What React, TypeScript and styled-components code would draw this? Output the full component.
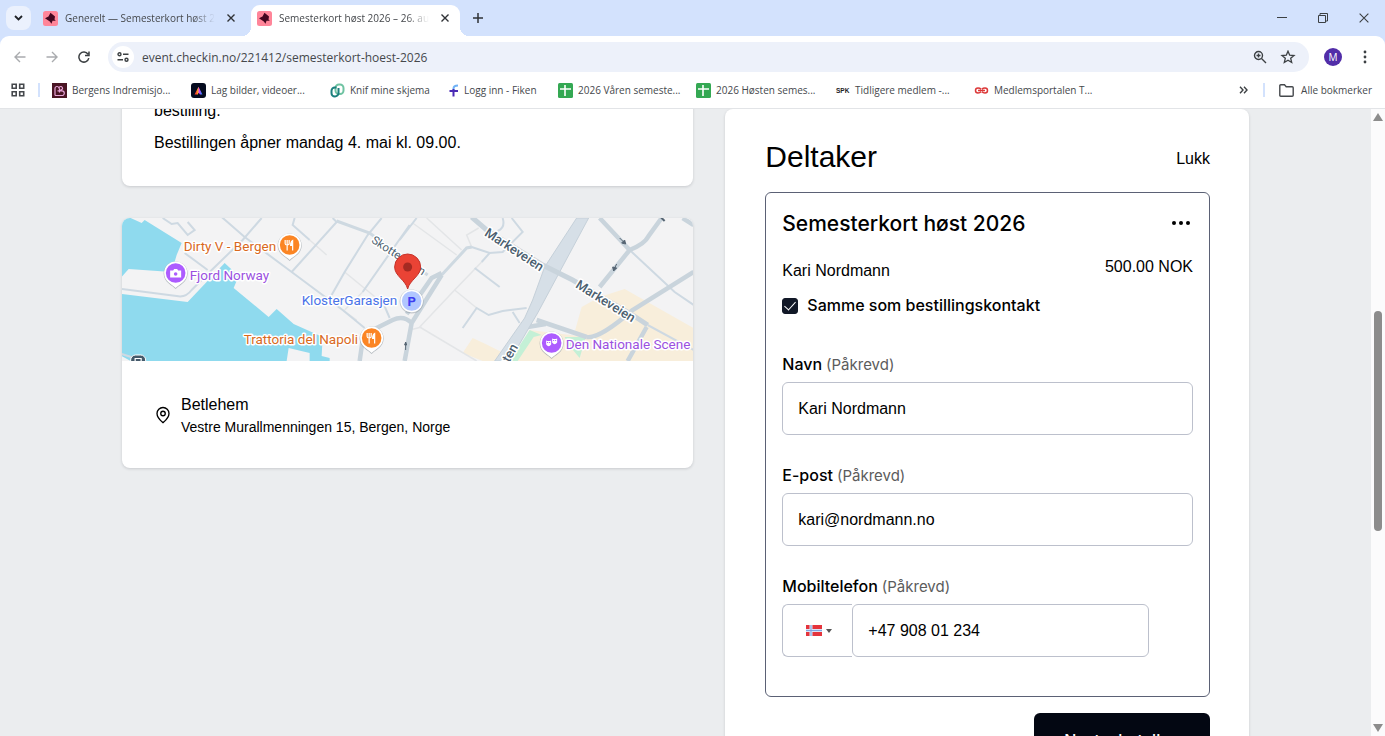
import React, { useState } from "react";
import styled, { createGlobalStyle } from "styled-components";
import { MapPin } from "lucide-react";

const GlobalStyle = createGlobalStyle`
  *, *::before, *::after { box-sizing: border-box; }
  body { margin: 0; font-family: "Liberation Sans", Arial, sans-serif; color: #000; }
  button, input, select { font: inherit; color: inherit; }
  button { border: 0; background: none; padding: 0; cursor: pointer; }
  a { color: inherit; text-decoration: none; }
  h1, h2, p { margin: 0; }
  svg { display: block; flex: none; }
`;

const mediumFont = `Inter, "Liberation Sans", sans-serif`;

const Window = styled.div`
  height: 100vh;
  display: flex;
  flex-direction: column;
  overflow: hidden;
  background: #d3e2fd;
`;

/* ---------- browser chrome ---------- */

const Chrome = styled.header`
  flex: none;
  font-family: "Open Sans", "Noto Sans", sans-serif;
  color: #45484c;
`;

const TabStrip = styled.div`
  height: 36px;
  display: flex;
  align-items: flex-end;
  padding-left: 6px;
`;

const TabSearch = styled.button`
  width: 25px;
  height: 24px;
  margin: 0 4px 6px 0;
  border-radius: 8px;
  background: #ebf1fd;
  display: grid;
  place-items: center;
`;

const Tab = styled.div<{ $active?: boolean }>`
  position: relative;
  width: ${(p) => (p.$active ? 209 : 216)}px;
  height: 31px;
  display: flex;
  align-items: center;
  gap: 7px;
  padding: 0 ${(p) => (p.$active ? 6 : 11)}px 5px ${(p) => (p.$active ? 6 : 8)}px;
  border-radius: 9px 9px 0 0;
  background: ${(p) => (p.$active ? "#fff" : "transparent")};
  font-size: 10px;

  &::before, &::after {
    content: "";
    display: ${(p) => (p.$active ? "block" : "none")};
    position: absolute;
    bottom: 0;
    width: 9px;
    height: 9px;
  }
  &::before { left: -9px; background: radial-gradient(circle at 0 0, transparent 9px, #fff 9px); }
  &::after { right: -9px; background: radial-gradient(circle at 100% 0, transparent 9px, #fff 9px); }
`;

const TabTitle = styled.span`
  flex: 1;
  min-width: 0;
  overflow: hidden;
  white-space: nowrap;
  mask-image: linear-gradient(90deg, #000 85%, transparent);
`;

const TabButton = styled.button`
  width: 18px;
  height: 18px;
  display: grid;
  place-items: center;
`;

const NewTab = styled(TabButton)`
  margin: 0 0 9px 9px;
`;

const WindowControls = styled.div`
  margin: 0 12px 9px auto;
  display: flex;
  gap: 23px;
`;

const Toolbar = styled.div`
  height: 42px;
  display: flex;
  align-items: center;
  padding: 0 11px;
  background: #fff;
  border-radius: 9px 9px 0 0;
`;

const ToolButton = styled.button`
  width: 18px;
  height: 18px;
  margin-right: 14px;
  display: grid;
  place-items: center;
`;

const AddressBar = styled.div`
  flex: 1;
  height: 30px;
  display: flex;
  align-items: center;
  padding: 0 12px 0 4px;
  margin-left: 1px;
  border-radius: 15px;
  background: #edf1fa;
`;

const SiteButton = styled.button`
  width: 22px;
  height: 22px;
  border-radius: 50%;
  background: #fff;
  display: grid;
  place-items: center;
`;

const Address = styled.input`
  flex: 1;
  min-width: 0;
  padding: 0 8px;
  border: 0;
  outline: 0;
  background: none;
  font-size: 12px;
  color: #45484c;
`;

const AddressAction = styled.button`
  margin-left: 12px;
`;

const Avatar = styled.button`
  width: 18px;
  height: 18px;
  margin: 0 20px 0 15px;
  border-radius: 50%;
  background: #512da8;
  color: #fff;
  font-size: 10px;
  line-height: 18px;
`;

const Bookmarks = styled.nav`
  height: 31px;
  display: flex;
  align-items: center;
  padding: 0 13px 6px 11px;
  background: #fff;
  border-bottom: 1px solid #e2e4e7;
  font-size: 10px;
`;

const Divider = styled.span`
  width: 2px;
  height: 14px;
  background: #d3e2fd;
`;

const AppsButton = styled.button`
  margin-right: 13px;
`;

const Bookmark = styled.a<{ $width: number }>`
  flex: 0 0 ${(p) => p.$width}px;
  display: flex;
  align-items: center;
  gap: 5px;
  white-space: nowrap;
`;

const BookmarkList = styled.div`
  flex: 1;
  display: flex;
  padding-left: 12px;
`;

const AllBookmarks = styled.a`
  display: flex;
  align-items: center;
  gap: 7px;
  margin-left: 14px;
`;

const MoreButton = styled.button`
  margin-right: 15px;
`;

/* ---------- page ---------- */

const Viewport = styled.div`
  flex: 1;
  min-height: 0;
  display: flex;
  background: #ebedef;
`;

const Page = styled.main`
  flex: 1;
  overflow: hidden;
`;

const Columns = styled.div`
  display: grid;
  grid-template-columns: 12fr 11fr;
  align-items: start;
  gap: 32px;
  max-width: 1127px;
  margin: 0 auto;
`;

const InfoColumn = styled.div`
  display: grid;
  gap: 32px;
  margin-top: -43px;
`;

const Card = styled.section`
  overflow: hidden;
  background: #fff;
  border-radius: 8px;
  box-shadow: 0 1px 3px rgba(16, 24, 40, 0.16);
`;

const Description = styled(Card)`
  display: grid;
  gap: 8px;
  padding: 33px 32px 31px;
  font-size: 16px;
  line-height: 24px;
`;

const MapDrawing = styled.svg`
  width: 100%;
  height: 143px;
  font-family: Roboto, sans-serif;
`;

const Venue = styled.div`
  display: flex;
  align-items: center;
  gap: 9px;
  padding: 32px 32px 31px;
`;

const VenueName = styled.p`
  font-size: 16px;
  line-height: 24px;
`;

const VenueAddress = styled.p`
  font-size: 14px;
  line-height: 20px;
`;

const OrderCard = styled(Card)`
  padding: 28px 39px 40px 40px;
`;

const OrderHead = styled.div`
  display: flex;
  align-items: center;
  justify-content: space-between;
  height: 40px;
  margin-bottom: 15px;
`;

const Heading = styled.h1`
  font-size: 30px;
  line-height: 40px;
  font-weight: 400;
`;

const TextButton = styled.button`
  padding-top: 4px;
  font-size: 16px;
  line-height: 24px;
`;

const Ticket = styled.div`
  padding: 16px 16px 39px;
  border: 1px solid #5b6175;
  border-radius: 6px;
`;

const TicketRow = styled.div`
  display: flex;
  align-items: flex-start;
  justify-content: space-between;
`;

const TicketTitle = styled.h2`
  font-family: ${mediumFont};
  font-size: 21px;
  line-height: 29px;
  font-weight: 500;
`;

const MenuButton = styled.button`
  height: 28px;
  margin-right: 3px;
`;

const Holder = styled.p`
  padding-top: 19px;
  font-size: 16px;
  line-height: 28px;
`;

const Price = styled(Holder)`
  line-height: 20px;
`;

const CheckLabel = styled.label`
  display: flex;
  align-items: center;
  gap: 9px;
  margin: 8px 0 35px;
  font-family: ${mediumFont};
  font-size: 16px;
  line-height: 24px;
  font-weight: 500;
`;

const Checkbox = styled.input`
  appearance: none;
  width: 16px;
  height: 16px;
  margin: 2px 0 0;
  border: 1px solid #111827;
  border-radius: 3px;
  display: grid;
  place-items: center;

  &:checked { background: #111827; }
  &:checked::before {
    content: "";
    width: 6px;
    height: 11px;
    margin-bottom: 3px;
    border: solid #fff;
    border-width: 0 1px 1px 0;
    transform: rotate(42deg);
  }
`;

const Field = styled.div`
  display: grid;
  gap: 6px;
  & + & { margin-top: 28px; }
`;

const FieldLabel = styled.label`
  display: flex;
  align-items: baseline;
  gap: 4px;
  height: 24px;
  font-family: ${mediumFont};
  font-size: 16px;
  line-height: 24px;
  font-weight: 500;
`;

const Required = styled.span`
  font-size: 15px;
  font-weight: 400;
  color: #5c5c5c;
`;

const TextInput = styled.input`
  width: 100%;
  min-width: 0;
  height: 53px;
  padding: 0 15px;
  border: 1px solid #bcc0cc;
  border-radius: 6px;
  outline: 0;
  background: #fff;
  font-size: 16px;
`;

const PhoneRow = styled.div`
  display: flex;
  margin-right: 44px;
`;

const CountryBox = styled.div`
  flex: 0 0 70px;
  display: flex;
  align-items: center;
  gap: 4px;
  padding-left: 23px;
  border: 1px solid #bcc0cc;
  border-right: 0;
  border-radius: 6px 0 0 6px;
  position: relative;
`;

const CountrySelect = styled.select`
  position: absolute;
  inset: 0;
  width: 100%;
  opacity: 0;
`;

const Submit = styled.button`
  display: block;
  width: 176px;
  height: 54px;
  margin: 16px 0 0 auto;
  border-radius: 6px;
  background: #030712;
  color: #fff;
  font-family: ${mediumFont};
  font-size: 16px;
  font-weight: 500;
`;

const Scrollbar = styled.div`
  flex: none;
  width: 14px;
  display: flex;
  flex-direction: column;
  align-items: center;
  justify-content: space-between;
  padding: 4px 0;
  background: #fbfbfc;
`;

const Track = styled.div`
  flex: 1;
  display: flex;
  flex-direction: column;
  width: 8px;
`;

const TrackSpace = styled.div<{ $grow: number }>`
  flex: ${(p) => p.$grow};
`;

const Thumb = styled.div`
  flex: 220;
  border-radius: 4px;
  background: #8c8c8c;
`;

/* ---------- icons ---------- */

const Cross = ({ size = 8, weight = 1.4, color = "#2f3236" }) => (
  <svg width={size} height={size} viewBox="0 0 8 8" stroke={color} strokeWidth={weight}>
    <path d="M.5.5l7 7M7.5.5l-7 7" />
  </svg>
);

const CheckinIcon = () => (
  <svg width="15" height="15" viewBox="0 0 15 15">
    <rect width="15" height="15" rx="2.5" fill="#ff8599" />
    <path d="M7.500 1.800L12 5.500 11.500 8.500 12.800 9.800 9.500 9.800 8.500 12.800 6.800 10.400 2 7.300 5.500 5.500z" fill="#43061f" />
  </svg>
);

const Arrow = ({ flip = false }) => (
  <svg width="12" height="12" viewBox="0 0 12 12" fill="none" stroke="#a9abae" strokeWidth="1.4">
    <path d={flip ? "M.5 6h10.500M6 1l5 5-5 5" : "M11.500 6H1M6 1L1 6l5 5"} />
  </svg>
);

const bookmarkIcons: Record<string, React.ReactNode> = {
  bergen: (
    <svg width="15" height="15" viewBox="0 0 15 15">
      <rect width="15" height="15" fill="#4a1524" />
      <path d="M3 12.500V5.500a2 2 0 014 0c0-3 4-2.500 3.500.5L7.500 8M3 12.500h7a2.300 2.300 0 000-4.600H5.500M7.500 5.500v4" fill="none" stroke="#e8a5d8" strokeWidth="1.2" />
    </svg>
  ),
  adobe: (
    <svg width="15" height="15" viewBox="0 0 15 15">
      <defs>
        <linearGradient id="rainbow">
          <stop offset="0.1" stopColor="#ff3d2e" />
          <stop offset="0.4" stopColor="#ffb020" />
          <stop offset="0.6" stopColor="#e03cff" />
          <stop offset="1" stopColor="#3a7bff" />
        </linearGradient>
      </defs>
      <rect width="15" height="15" rx="3" fill="#050b1f" />
      <path d="M4.500 11L7.500 5 10.500 11H9.300L7.500 8.200 6.400 11z" fill="url(#rainbow)" stroke="url(#rainbow)" strokeWidth="1.2" />
    </svg>
  ),
  knif: (
    <svg width="15" height="15" viewBox="0 0 15 15" fill="none" strokeWidth="2">
      <rect x="5.5" y="1.5" width="8" height="9.5" rx="3.5" stroke="#6fc3a2" />
      <path d="M6.500 4.500H4.800a3.300 3.300 0 00-3.300 3.300v2.400a3.300 3.300 0 003.300 3.300 3.500 3.500 0 003.700-3.300V5" stroke="#1b7f7d" />
    </svg>
  ),
  fiken: (
    <svg width="10" height="13" viewBox="0 0 10 13" fill="none" strokeWidth="2">
      <path d="M4.500 7V4.500Q4.500 1.500 9 1.500" stroke="#6fb1f5" />
      <path d="M.5 7H9M4.500 5v7.500" stroke="#4b2bb5" />
    </svg>
  ),
  sheet: (
    <svg width="15" height="15" viewBox="0 0 15 15">
      <rect width="15" height="15" rx="1.5" fill="#34a853" />
      <path d="M2 6h11M7 2v11" stroke="#fff" strokeWidth="1.6" />
    </svg>
  ),
  spk: (
    <svg width="15" height="15" viewBox="0 0 15 15">
      <text x="1" y="10" fontFamily="Liberation Sans, sans-serif" fontWeight="700" fontSize="6.5" fill="#222">SPK</text>
    </svg>
  ),
  chain: (
    <svg width="15" height="15" viewBox="0 0 15 15" fill="none" stroke="#dc3838" strokeWidth="1.5">
      <path d="M7 6.200Q6 5 4 5a2.500 2.500 0 000 5q2 0 3-1.200M8 6.200Q9 5 11 5a2.500 2.500 0 010 5q-2 0-3-1.200M4 7.500h7" />
    </svg>
  ),
};

const bookmarks = [
  { icon: "bergen", text: "Bergens Indremisjo...", width: 139 },
  { icon: "adobe", text: "Lag bilder, videoer...", width: 139 },
  { icon: "knif", text: "Knif mine skjema", width: 119 },
  { icon: "fiken", text: "Logg inn - Fiken", width: 109 },
  { icon: "sheet", text: "2026 Våren semeste...", width: 138 },
  { icon: "sheet", text: "2026 Høsten semes...", width: 139 },
  { icon: "spk", text: "Tidligere medlem -...", width: 139 },
  { icon: "chain", text: "Medlemsportalen T...", width: 139 },
];

/* ---------- map ---------- */

const minorRoads = [
  "M63 35L86 52",
  "M41 0L50 6 56 5 66 17 73 12 66 4",
  "M173 0L171 7 188 22",
  "M278 22L295 0",
  "M350 29L368 35 381 34 401 14 390 0",
  "M345 30L350 29M360 44L368 35",
  "M353 50L378 69",
  "M341 110L355 90 367 97 381 93 405 90M391 94L398 105",
  "M508 32L553 74 572 87",
  "M381 0Q384 10 376 13",
  "M526 107L572 132",
];

const lanes = [
  "M188 22L205 37",
  "M291 5L335 37M305 0L340 32",
  "M360 44L333 72 298 109 355 143",
  "M333 72L355 90",
  "M350 29L345 17 357 10",
  "M241 74L223 92M223 54L262 86",
  "M221 92L235 102M288 112L300 109",
];

const Badge = ({ x, y, color, children }: { x: number; y: number; color: string; children: React.ReactNode }) => (
  <g transform={`translate(${x} ${y})`}>
    <path d="M0 16C-3 12.500-12 9.500-12 .5a12 12 0 0124 0C12 9.500 3 12.500 0 16z" fill="#8b949c" opacity=".6" />
    <path d="M0 15C-3 11.500-11.500 9-11.500 0a11.500 11.500 0 0123 0C11.500 9 3 11.500 0 15z" fill="#fff" />
    <circle r="9.8" fill={color} />
    {children}
  </g>
);

const Fork = () => (
  <g stroke="#fff" fill="none" strokeWidth="1.2">
    <path d="M-4.500-5v3.500q0 1.500 2 1.500t2-1.500V-5M-2.500-5v10.500" />
    <path d="M3 5.500V-4.500q-2 1-2 5h2" fill="#fff" />
  </g>
);

const halo = { stroke: "#fff", strokeWidth: 3, paintOrder: "stroke", strokeLinejoin: "round" } as const;

const VenueMap = () => (
  <MapDrawing viewBox="0 0 572 143" preserveAspectRatio="xMidYMid slice" role="img" aria-label="Kart over Bergen">
    <rect width="572" height="143" fill="#f3f3f4" />
    <path d="M0 0H9L20 5 23 2 60 25 55 37 50 54 7 51 0 59z" fill="#8fdaee" />
    <path d="M0 76L66 84 103 45 117 58 112 70 147 99 155 91 172 106 201 119 200 138 208 140V143H188V135L167 130 165 143H9L0 138z" fill="#8fdaee" />
    <path d="M503 71L572 110V143H458L465 119 453 114 460 89 478 79z" fill="#f8eedb" />
    <path d="M351 120L366 127 380 134 378 143H361L341 135z" fill="#f8eedb" />
    <path d="M408 112L465 119 458 143H390z" fill="#f8eedb" />
    <path d="M408 112L420 117 412 119 396 143H388zM443 119L464 119 458 140 448 128z" fill="#c4f0d6" />
    <g fill="none" stroke="#e3e5e7" strokeWidth="1.5">
      {lanes.map((d) => <path key={d} d={d} />)}
    </g>
    <g fill="none" stroke="#ced9e2" strokeWidth="2">
      {minorRoads.map((d) => <path key={d} d={d} />)}
      <path d="M100-1L123 19 170 54 221 92 243 110" />
      <path d="M140 0L121 22 88 54 70 72Q64 80 55 78L0 71" />
      <path d="M170 54L215 4 211 0M260 0L246 17 223 54 210 77M288 7L241 74M262 86L268 100" />
      <path d="M0 136L16 141" />
    </g>
    <g fill="none" stroke="#ced9e1" strokeWidth="3">
      <path d="M215 3L248 15 275 35 306 57" />
      <path d="M320 57L345 30 350 29" />
    </g>
    <g fill="none" stroke="#c9d4dc" strokeWidth="4.5">
      <path d="M251 112L271 102Q282 97 290 105M283 143L290 105 320 57M285 96L310 60 320 55M238 143L241 122" />
      <path d="M465 119Q478 121 511 92L572 54M465 119L415 102M406 109L424 106M525 109L506 143M478 0L508 32 478 69M508 32Q523 26 527 18L540 0M561 0L572 7" />
    </g>
    <path d="M455 0H467L438 54 416 95 406 112 388 143H373L403 100 411 82 423 49z" fill="#d6dfe7" stroke="#c5d0d9" />
    <path d="M350-1L365 12 421 47 451 62 511 97 526 107" fill="none" stroke="#c9d4dc" strokeWidth="5" />
    <g stroke="#566573" fill="#566573" strokeWidth="1">
      <path d="M284 132V124M283 127l1-3 1 3zM495 46l-3 6M491 49l1 4 3-3zM498 20l5 5M500 25l4 1-1-4z" />
      <path d="M539-1l4 4" strokeWidth="2" />
    </g>

    <g fill="#4c5f70" fontWeight="500" {...halo}>
      <text transform="translate(249 24) rotate(33)" fontSize="11.5" fontWeight="400">Skottegaten</text>
      <text transform="translate(362 17) rotate(33)" fontSize="13">Markeveien</text>
      <text transform="translate(453 69) rotate(32)" fontSize="13">Markeveien</text>
      <text transform="translate(384 151) rotate(-60)" fontSize="13">eten</text>
    </g>
    <g fontSize="13.5" {...halo}>
      <text x="62" y="33" fill="#d9691d">Dirty V - Bergen</text>
      <text x="68" y="62" fill="#9b51e0">Fjord Norway</text>
      <text x="180" y="87" fill="#4a73e8">KlosterGarasjen</text>
      <text x="122" y="126" fill="#d9691d">Trattoria del Napoli</text>
      <text x="444" y="131" fill="#9b51e0">Den Nationale Scene</text>
    </g>

    <Badge x={168} y={27} color="#fb8524"><Fork /></Badge>
    <Badge x={250} y={120} color="#fb8524"><Fork /></Badge>
    <Badge x={54} y={55} color="#ad5cff">
      <path d="M-5.500-2.500h3l1-1.500h3l1 1.500h3v7h-11z" fill="#fff" />
      <circle cy="1" r="1.8" fill="#ad5cff" />
    </Badge>
    <Badge x={430} y={125} color="#ad5cff">
      <path d="M-5.500-2.500q2.500 1 5 0v4q-2.500 3.500-5 0zM.5-4.500q2.500 1 5 0v4q-2.500 3.500-5 0z" fill="#fff" />
      <path d="M-4.500-.5h1M-2.500-.5h1M1.500-2.500h1M3.500-2.500h1" stroke="#ad5cff" />
    </Badge>
    <circle cx="290" cy="83.5" r="12" fill="#8b949c" opacity=".45" />
    <circle cx="290" cy="83" r="11.3" fill="#fff" />
    <circle cx="290" cy="83" r="9.8" fill="#b1c6ff" />
    <text x="290" y="88" textAnchor="middle" fontSize="13" fontWeight="700" fill="#3d3df0">P</text>
    <path d="M286 71C284 62 273 58 273 49a13 13 0 0126 0C299 58 288 62 286 71z" fill="#ea4335" stroke="#c5332a" />
    <circle cx="286" cy="49" r="4.5" fill="#a52a22" />
    <rect x="9" y="137" width="15" height="14" rx="5" fill="#455a6b" stroke="#fff" />
    <path d="M13.500 143v-2.500h6v2.500" fill="none" stroke="#fff" strokeWidth="1.2" />
  </MapDrawing>
);

const NorwayFlag = () => (
  <svg width="16" height="11" viewBox="0 0 16 11">
    <rect width="16" height="11" fill="#e5343c" />
    <path d="M5 0v11M0 5.500h16" stroke="#d9e4f7" strokeWidth="3" />
    <path d="M5 0v11M0 5.500h16" stroke="#7fa3e0" strokeWidth="1" />
  </svg>
);

const TextField = ({ id, label, type, initial }: { id: string; label: string; type: string; initial: string }) => {
  const [value, setValue] = useState(initial);
  return (
    <Field>
      <FieldLabel htmlFor={id}>{label} <Required>(Påkrevd)</Required></FieldLabel>
      <TextInput id={id} type={type} value={value} onChange={(e) => setValue(e.target.value)} />
    </Field>
  );
};

const BrowserChrome = () => (
  <Chrome>
    <TabStrip>
      <TabSearch aria-label="Søk i faner">
        <svg width="9" height="6" viewBox="0 0 9 6" fill="none" stroke="#1f2226" strokeWidth="1.8"><path d="M1 1l3.500 3.500L8 1" /></svg>
      </TabSearch>
      <Tab>
        <CheckinIcon />
        <TabTitle>Generelt — Semesterkort høst 2026</TabTitle>
        <TabButton aria-label="Lukk fane"><Cross /></TabButton>
      </Tab>
      <Tab $active>
        <CheckinIcon />
        <TabTitle>Semesterkort høst 2026 – 26. august</TabTitle>
        <TabButton aria-label="Lukk fane"><Cross /></TabButton>
      </Tab>
      <NewTab aria-label="Ny fane">
        <svg width="10" height="10" viewBox="0 0 10 10" stroke="#2f3236" strokeWidth="1.5"><path d="M5 0v10M0 5h10" /></svg>
      </NewTab>
      <WindowControls>
        <TabButton aria-label="Minimer">
          <svg width="10" height="10" viewBox="0 0 10 10" stroke="#3c4043"><path d="M0 4.500h10" /></svg>
        </TabButton>
        <TabButton aria-label="Gjenopprett">
          <svg width="10" height="10" viewBox="0 0 10 10" fill="none" stroke="#3c4043"><path d="M2 2.500V.5h7.500v7.500h-2M.5 2.500h7v7h-7z" /></svg>
        </TabButton>
        <TabButton aria-label="Lukk vindu"><Cross size={10} weight={0.9} color="#3c4043" /></TabButton>
      </WindowControls>
    </TabStrip>
    <Toolbar>
      <ToolButton aria-label="Tilbake"><Arrow /></ToolButton>
      <ToolButton aria-label="Fremover"><Arrow flip /></ToolButton>
      <ToolButton aria-label="Last inn på nytt">
        <svg width="12" height="12" viewBox="0 0 12 12" fill="none" stroke="#3c4043" strokeWidth="1.5"><path d="M10.800 7.200A5 5 0 1110 3.200M11 .5v4H7" /></svg>
      </ToolButton>
      <AddressBar>
        <SiteButton aria-label="Nettstedsinformasjon">
          <svg width="12" height="10" viewBox="0 0 12 10" fill="none" stroke="#3c4043" strokeWidth="1.4">
            <circle cx="2.5" cy="2.2" r="1.5" /><circle cx="9.5" cy="7.8" r="1.5" /><path d="M6 2.200h5.500M.5 7.800H6" />
          </svg>
        </SiteButton>
        <Address aria-label="Adresse" defaultValue="event.checkin.no/221412/semesterkort-hoest-2026" />
        <AddressAction aria-label="Zoom">
          <svg width="14" height="14" viewBox="0 0 14 14" fill="none" stroke="#3c4043" strokeWidth="1.4"><circle cx="5.5" cy="5.5" r="4" /><path d="M8.500 8.500L13 13M5.500 3.500v4M3.500 5.500h4" /></svg>
        </AddressAction>
        <AddressAction aria-label="Bokmerk siden">
          <svg width="18" height="14" viewBox="0 0 18 14" fill="none" stroke="#3c4043" strokeWidth="1.3"><path d="M9 1.200l1.700 4 4.300.3-3.300 2.800 1 4.200L9 10.300l-3.700 2.200 1-4.200L3 5.500l4.300-.3z" /></svg>
        </AddressAction>
      </AddressBar>
      <Avatar aria-label="Profil">M</Avatar>
      <button aria-label="Meny">
        <svg width="12" height="14" viewBox="0 0 12 14" fill="#3c4043"><circle cx="3" cy="2" r="1.4" /><circle cx="3" cy="7" r="1.4" /><circle cx="3" cy="12" r="1.4" /></svg>
      </button>
    </Toolbar>
    <Bookmarks aria-label="Bokmerker">
      <AppsButton aria-label="Faneregrupper">
        <svg width="14" height="14" viewBox="0 0 14 14" fill="none" stroke="#45484c" strokeWidth="1.6">
          <path d="M1.200 1.200h4v4h-4zM8.700 1.200h4v4h-4zM1.200 8.700h4v4h-4zM8.700 8.700h4v4h-4z" />
        </svg>
      </AppsButton>
      <Divider />
      <BookmarkList>
        {bookmarks.map((b) => (
          <Bookmark key={b.text} href="#" $width={b.width}>{bookmarkIcons[b.icon]}{b.text}</Bookmark>
        ))}
      </BookmarkList>
      <MoreButton aria-label="Flere bokmerker">
        <svg width="9" height="8" viewBox="0 0 9 8" fill="none" stroke="#3c4043" strokeWidth="1.4"><path d="M1 .8L4 4 1 7.200M5 .8L8 4 5 7.200" /></svg>
      </MoreButton>
      <Divider />
      <AllBookmarks href="#">
        <svg width="15" height="13" viewBox="0 0 15 13" fill="none" stroke="#45484c" strokeWidth="1.4"><path d="M.8 11.200V1.800q0-1 1-1h3.700L7.200 2.700h6q1 0 1 1v7.500q0 1-1 1H1.800q-1 0-1-1z" /></svg>
        Alle bokmerker
      </AllBookmarks>
    </Bookmarks>
  </Chrome>
);

export default function App() {
  const [same, setSame] = useState(true);
  const [phone, setPhone] = useState("+47 908 01 234");
  return (
    <Window>
      <GlobalStyle />
      <BrowserChrome />
      <Viewport>
        <Page>
          <Columns>
            <InfoColumn>
              <Description>
                <p>bestilling.</p>
                <p>Bestillingen åpner mandag 4. mai kl. 09.00.</p>
              </Description>
              <Card>
                <VenueMap />
                <Venue>
                  <MapPin size={18} strokeWidth={1.8} />
                  <div>
                    <VenueName>Betlehem</VenueName>
                    <VenueAddress>Vestre Murallmenningen 15, Bergen, Norge</VenueAddress>
                  </div>
                </Venue>
              </Card>
            </InfoColumn>
            <OrderCard>
              <OrderHead>
                <Heading>Deltaker</Heading>
                <TextButton>Lukk</TextButton>
              </OrderHead>
              <Ticket>
                <TicketRow>
                  <TicketTitle>Semesterkort høst 2026</TicketTitle>
                  <MenuButton aria-label="Flere valg">
                    <svg width="18" height="4" viewBox="0 0 18 4"><circle cx="2" cy="2" r="2" /><circle cx="9" cy="2" r="2" /><circle cx="16" cy="2" r="2" /></svg>
                  </MenuButton>
                </TicketRow>
                <TicketRow>
                  <Holder>Kari Nordmann</Holder>
                  <Price>500.00 NOK</Price>
                </TicketRow>
                <CheckLabel>
                  <Checkbox type="checkbox" checked={same} onChange={(e) => setSame(e.target.checked)} />
                  Samme som bestillingskontakt
                </CheckLabel>
                <TextField id="name" label="Navn" type="text" initial="Kari Nordmann" />
                <TextField id="email" label="E-post" type="email" initial="kari@nordmann.no" />
                <Field>
                  <FieldLabel htmlFor="phone">Mobiltelefon <Required>(Påkrevd)</Required></FieldLabel>
                  <PhoneRow>
                    <CountryBox>
                      <NorwayFlag />
                      <svg width="6" height="4" viewBox="0 0 6 4" fill="#555"><path d="M0 0h6L3 4z" /></svg>
                      <CountrySelect aria-label="Landskode" defaultValue="no"><option value="no">+47</option></CountrySelect>
                    </CountryBox>
                    <TextInput id="phone" type="tel" value={phone} onChange={(e) => setPhone(e.target.value)} />
                  </PhoneRow>
                </Field>
              </Ticket>
              <Submit>Neste: betaling</Submit>
            </OrderCard>
          </Columns>
        </Page>
        <Scrollbar>
          <svg width="10" height="8" viewBox="0 0 10 8" fill="#8c8c8c"><path d="M5 0l5 8H0z" /></svg>
          <Track>
            <TrackSpace $grow={190} />
            <Thumb />
            <TrackSpace $grow={193} />
          </Track>
          <svg width="10" height="8" viewBox="0 0 10 8" fill="#8c8c8c"><path d="M0 0h10L5 8z" /></svg>
        </Scrollbar>
      </Viewport>
    </Window>
  );
}
